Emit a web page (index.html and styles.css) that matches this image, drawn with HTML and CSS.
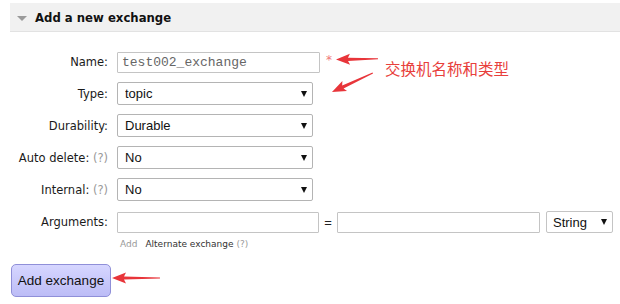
FILE: index.html
```html
<!DOCTYPE html>
<html lang="en">
<head>
  <meta charset="UTF-8">
  <title>Add a new exchange</title>
  <link rel="stylesheet" href="styles.css">
</head>
<body>

  <div class="section">
    <h2 class="section-header"><span class="toggle"></span>Add a new exchange</h2>

    <form class="exchange-form" onsubmit="return false">
      <label class="label">Name:</label>
      <div class="control">
        <input type="text" class="text-input name-input" value="test002_exchange">
        <span class="mandatory">*</span>
      </div>

      <label class="label">Type:</label>
      <div class="control">
        <div class="select-wrap"><select class="select"><option>topic</option></select></div>
      </div>

      <label class="label">Durability:</label>
      <div class="control">
        <div class="select-wrap"><select class="select"><option>Durable</option></select></div>
      </div>

      <label class="label">Auto delete: <span class="help">(?)</span></label>
      <div class="control">
        <div class="select-wrap"><select class="select"><option>No</option></select></div>
      </div>

      <label class="label">Internal: <span class="help">(?)</span></label>
      <div class="control">
        <div class="select-wrap"><select class="select"><option>No</option></select></div>
      </div>

      <label class="label">Arguments:</label>
      <div class="control args">
        <div class="args-row">
          <input type="text" class="text-input arg-key">
          <span class="equals">=</span>
          <input type="text" class="text-input arg-value">
          <div class="select-wrap small"><select class="select"><option>String</option></select></div>
        </div>
        <div class="arg-links">
          <span class="muted">Add</span>
          <span class="link">Alternate exchange <span class="help">(?)</span></span>
        </div>
      </div>
    </form>

    <button class="submit" type="button">Add exchange</button>
  </div>

  <!-- screenshot annotations -->
  <div class="note">交换机名称和类型</div>
  <svg class="arrows" width="620" height="304" viewBox="0 0 620 304">
    <g fill="#e8353a">
      <g transform="translate(336 59.5) rotate(-1)">
        <polygon points="0,0 14,-5.5 12,-1.6 42,-0.6 42,0.6 12,1.6 14,5.5"/>
      </g>
      <g transform="translate(332 92) rotate(-25)">
        <polygon points="0,0 14,-5.5 12,-1.6 45,-0.6 45,0.6 12,1.6 14,5.5"/>
      </g>
      <g transform="translate(112 278) rotate(0)">
        <polygon points="0,0 14,-5.5 12,-1.6 48,-0.6 48,0.6 12,1.6 14,5.5"/>
      </g>
    </g>
  </svg>

</body>
</html>
```

FILE: styles.css
```css
* {
  box-sizing: border-box;
}

body {
  margin: 0;
  background: #fff;
  color: #222;
  font-family: 'DejaVu Sans', Verdana, sans-serif;
  position: relative;
  width: 620px;
  height: 304px;
  overflow: hidden;
}

.section {
  margin-left: 10px;
}

.section-header {
  margin: 3px 0 0 0;
  height: 29px;
  display: flex;
  align-items: center;
  padding: 2px 0 0 7px;
  background: #f1f1f1;
  border-bottom: 1px solid #e2e2e2;
  font-size: 11.7px;
  font-weight: bold;
  color: #111;
}

.toggle {
  width: 0;
  height: 0;
  border-left: 5px solid transparent;
  border-right: 5px solid transparent;
  border-top: 5px solid #9a9a9a;
  margin-right: 8px;
  margin-top: 1px;
}

.exchange-form {
  display: grid;
  grid-template-columns: 98px auto;
  column-gap: 9px;
  row-gap: 9px;
  align-items: start;
  padding-top: 18px;
}

.label {
  text-align: right;
  font-size: 11.5px;
  height: 23px;
  line-height: 25px;
  color: #1a1a1a;
  white-space: nowrap;
}

.help {
  color: #999;
}

.control {
  display: flex;
  align-items: center;
  min-height: 23px;
}

.text-input {
  height: 21px;
  border: 1px solid #c4c4c4;
  border-radius: 1px;
  background: #fff;
  padding: 0 4px;
  margin: 0;
}

.name-input {
  width: 203px;
  margin-top: 2px;
  align-self: flex-start;
  font-family: 'Liberation Mono', 'DejaVu Sans Mono', monospace;
  font-size: 13px;
  color: #666;
}

.mandatory {
  color: #f07878;
  font-size: 12px;
  margin-left: 6px;
  align-self: flex-start;
  margin-top: 3px;
}

.select-wrap {
  position: relative;
  width: 196px;
  height: 23px;
}

.select-wrap::after {
  content: "";
  position: absolute;
  right: 6px;
  top: 9px;
  border-left: 3.5px solid transparent;
  border-right: 3.5px solid transparent;
  border-top: 6px solid #111;
  pointer-events: none;
}

.select {
  appearance: none;
  -webkit-appearance: none;
  width: 100%;
  height: 100%;
  margin: 0;
  border: 1px solid #b4b4b4;
  border-radius: 2px;
  background: #fff;
  padding: 0 0 0 7px;
  font-family: 'Liberation Sans', Arial, sans-serif;
  font-size: 13px;
  color: #111;
}

.args {
  flex-direction: column;
  align-items: flex-start;
}

.args-row {
  display: flex;
  align-items: center;
  margin-top: 1px;
}

.arg-key {
  width: 202px;
}

.equals {
  width: 18px;
  text-align: center;
  font-family: 'Liberation Sans', Arial, sans-serif;
  font-size: 13px;
}

.arg-value {
  width: 203px;
}

.select-wrap.small {
  width: 67px;
  height: 22px;
  margin-left: 6px;
}

.select-wrap.small::after {
  top: 8px;
}

.select-wrap.small .select {
  padding-left: 6px;
  border-color: #c4c4c4;
}

.arg-links {
  display: flex;
  gap: 8px;
  margin-top: 5px;
  margin-left: 3px;
  font-size: 9px;
  line-height: 12px;
}

.muted {
  color: #999;
}

.link {
  color: #333;
}

.submit {
  margin: 14px 0 0 1px;
  width: 100px;
  height: 33px;
  border: 1px solid #8f8fd8;
  border-radius: 5px;
  background: linear-gradient(#d6d6ff, #bcbcf6);
  font-family: 'Liberation Sans', Arial, sans-serif;
  font-size: 13.5px;
  color: #111;
  padding: 0;
}

.note {
  position: absolute;
  left: 385px;
  top: 58px;
  font-family: 'Noto Sans CJK SC', sans-serif;
  font-size: 15.5px;
  line-height: 20px;
  color: #e8403c;
}

.arrows {
  position: absolute;
  left: 0;
  top: 0;
  pointer-events: none;
}
```
